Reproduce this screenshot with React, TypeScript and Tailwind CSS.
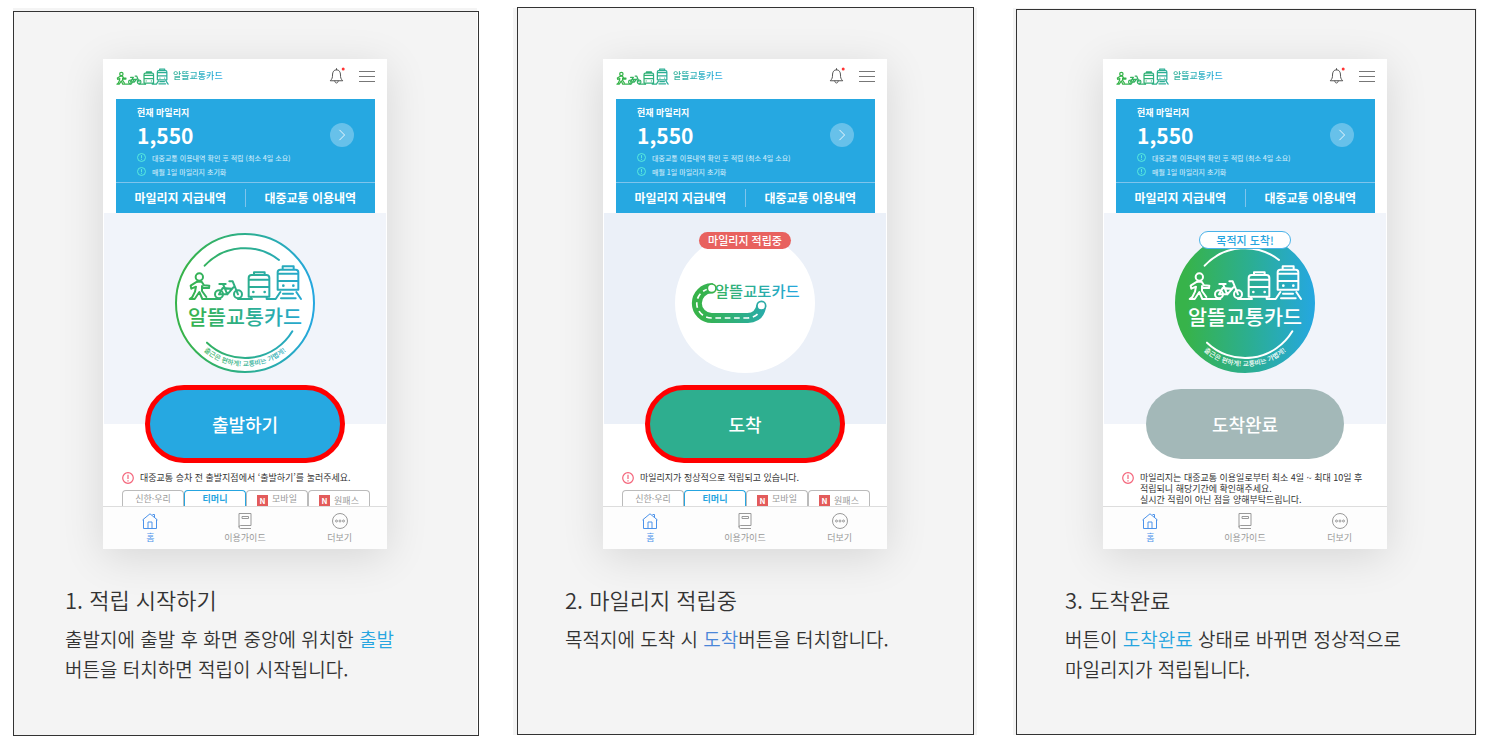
import { type ReactNode } from 'react'

type Stage = 'start' | 'saving' | 'done'

type Step = {
  stage: Stage
  frame: string
  title: string
  body: ReactNode
}

const STEPS: Step[] = [
  {
    stage: 'start',
    frame: 'left-0 -right-[2px] top-[3px] -bottom-px',
    title: '1. 적립 시작하기',
    body: (
      <>
        출발지에 출발 후 화면 중앙에 위치한 <span className="text-[#26a5e0]">출발</span>
        <br />
        버튼을 터치하면 적립이 시작됩니다.
      </>
    ),
  },
  {
    stage: 'saving',
    frame: 'left-1 right-[3px] -top-px bottom-0',
    title: '2. 마일리지 적립중',
    body: (
      <>
        목적지에 도착 시 <span className="text-[#4a86d8]">도착</span>버튼을 터치합니다.
      </>
    ),
  },
  {
    stage: 'done',
    frame: 'left-[3px] right-px top-px bottom-0',
    title: '3. 도착완료',
    body: (
      <>
        버튼이 <span className="text-[#26a5e0]">도착완료</span> 상태로 바뀌면 정상적으로
        <br />
        마일리지가 적립됩니다.
      </>
    ),
  },
]

const CARD_TABS = [
  { name: '신한·우리' },
  { name: '티머니', active: true },
  { name: '모바일', badge: true },
  { name: '원패스', badge: true, single: true },
]

function BrandGradient({ id, from = 46, to = 466 }: { id: string; from?: number; to?: number }) {
  return (
    <linearGradient id={id} gradientUnits="userSpaceOnUse" x1={from} y1="0" x2={to} y2="0">
      <stop offset="0.08" stopColor="#37b34a" />
      <stop offset="0.55" stopColor="#2bae94" />
      <stop offset="1" stopColor="#25a7e1" />
    </linearGradient>
  )
}

// walker, bicycle, bus and train standing on one line
function Vehicles({ stroke, width }: { stroke: string; width: number }) {
  return (
    <g fill="none" stroke={stroke} strokeWidth={width} strokeLinecap="round" strokeLinejoin="round">
      <circle cx="119" cy="169" r="11" />
      <path d="M112 183 L93 195 L95 204 L109 198 L106 213 L98 229 L90 235 H105 L119 214 L128 235 H182" />
      <path d="M112 183 H126 L133 194 L149 195 L148 202 L130 201 L127 196 L127 211 L140 229" />
      <circle cx="178" cy="221" r="12" />
      <circle cx="235" cy="221" r="12" />
      <path d="M178 221 L189 202 L218 204 L203 221 H178 M179 190 H198 M190 190 L203 221 M209 182 H219 L235 221 M203 221 L221 200 M235 235 H277" />
      <path d="M267 172 Q267 163 276 163 H320 Q329 163 329 172 V228 H267 Z M283 162 V155 H315 V162 M267 177 H329 M267 199 H329 M274 229 V235 M321 229 V235 H348 L362 214" />
      <path d="M354 155 Q354 147 362 147 H408 Q416 147 416 155 V207 H354 Z M369 146 V137 H402 V146 M354 159 H416 M354 181 H416 M410 214 L424 235 M370 219 H400 M364 233 H408" />
      <g fill={stroke} stroke="none">
        <circle cx="281" cy="214" r="4" />
        <circle cx="315" cy="214" r="4" />
        <circle cx="371" cy="195" r="4" />
        <circle cx="401" cy="195" r="4" />
      </g>
    </g>
  )
}

function Emblem({ id, filled = false }: { id: string; filled?: boolean }) {
  const paint = `url(#${id})`
  const ink = filled ? '#ffffff' : paint
  return (
    <svg viewBox="46 37 420 420" className="h-[140px] w-[140px]" role="img" aria-label="알뜰교통카드">
      <defs>
        <BrandGradient id={id} />
        <path id={`${id}-arc`} d="M66 247 A190 190 0 0 0 446 247" />
      </defs>
      <circle cx="256" cy="247" r="207" fill={filled ? paint : '#ffffff'} stroke={paint} strokeWidth="6" />
      <g fill="none" stroke={ink} strokeWidth="6" strokeLinecap="round">
        <path d="M135 135 A165 165 0 0 1 358 118" />
        <path d="M142 366 A165 165 0 0 0 398 332" />
      </g>
      <Vehicles stroke={ink} width={6} />
      <text x="256" y="314" textAnchor="middle" fontSize="62" fontWeight="500" fill={ink}>
        알뜰교통카드
      </text>
      <text fontSize="20" fontWeight="500" fill={ink} textAnchor="middle">
        <textPath href={`#${id}-arc`} startOffset="50%">
          출근은 편하게! 교통비는 가볍게!
        </textPath>
      </text>
    </svg>
  )
}

function RoadEmblem() {
  return (
    <svg viewBox="46 37 420 420" className="h-[140px] w-[140px]" role="img" aria-label="알뜰교통카드">
      <defs>
        <BrandGradient id="road" from={96} to={420} />
      </defs>
      <circle cx="256" cy="247" r="210" fill="#ffffff" />
      <path
        d="M160 203 H156 A44 44 0 0 0 156 292 H264 Q300 290 305 255"
        fill="none"
        stroke="url(#road)"
        strokeWidth="30"
      />
      <path
        d="M146 205 A44 44 0 0 0 156 292 H264 Q290 290 300 272"
        fill="none"
        stroke="#ffffff"
        strokeWidth="5"
        strokeDasharray="17 11"
      />
      <circle cx="156" cy="203" r="13" fill="#ffffff" stroke="#37b34a" strokeWidth="5" />
      <circle cx="305" cy="255" r="13" fill="#ffffff" stroke="#2aaba6" strokeWidth="5" />
      <text x="166" y="228" fontSize="46" fontWeight="500" fill="url(#road)">
        알뜰교토카드
      </text>
    </svg>
  )
}

function HeaderLogo({ id }: { id: string }) {
  return (
    <div className="flex items-center gap-1">
      <svg viewBox="84 130 346 110" className="h-[17px] w-[53px]" aria-hidden="true">
        <defs>
          <BrandGradient id={id} from={84} to={640} />
        </defs>
        <Vehicles stroke={`url(#${id})`} width={8} />
      </svg>
      <span className="bg-linear-to-r from-[#2bae94] to-[#25a7e1] bg-clip-text text-[9px] leading-3 font-medium text-transparent">
        알뜰교통카드
      </span>
    </div>
  )
}

function BellIcon() {
  return (
    <svg viewBox="0 0 16 18" className="h-[18px] w-4" fill="none" stroke="#555555" strokeLinecap="round" strokeLinejoin="round">
      <path d="M1.5 13.5 C3.2 12 3.5 10.5 3.5 8 C3.5 4.8 5 2.8 7.5 2.8 C10 2.8 11.5 4.8 11.5 8 C11.5 10.5 11.8 12 13.5 13.5 Z M7.5 2.8 V1.6 M5.8 14 C5.8 16.8 9.2 16.8 9.2 14" />
      <circle cx="14.2" cy="2" r="1.5" fill="#f33" stroke="none" />
    </svg>
  )
}

function Notice({ className }: { className: string }) {
  return (
    <svg viewBox="0 0 12 12" className={className} fill="none" stroke="currentColor" strokeWidth="1.2" aria-hidden="true">
      <circle cx="6" cy="6" r="5.3" />
      <path d="M6 2.8 V7 M6 8.2 V9.4" />
    </svg>
  )
}

function MileagePanel() {
  return (
    <section className="mr-3 ml-[13px] bg-[#26a8e1] text-white">
      <div className="flex h-[84px] items-center justify-between border-b border-[#7fc4ec] px-[21px] pt-1">
        <div>
          <h3 className="text-[9px] leading-3 font-bold">현재 마일리지</h3>
          <p className="text-[21px] leading-8 font-bold">1,550</p>
          <ul className="text-[7px] leading-[14px] font-medium text-[#c4e7f8]">
            <li className="flex items-center gap-[6px]">
              <Notice className="h-[9px] w-[9px] text-[#5ff0dc]" />
              대중교통 이용내역 확인 후 적립 (최소 4일 소요)
            </li>
            <li className="flex items-center gap-[6px]">
              <Notice className="h-[9px] w-[9px] text-[#5ff0dc]" />
              매월 1일 마일리지 초기화
            </li>
          </ul>
        </div>
        <button
          type="button"
          aria-label="마일리지 상세"
          className="-mt-4 flex h-6 w-6 shrink-0 items-center justify-center rounded-full bg-[#67c1ea]"
        >
          <svg viewBox="0 0 8 14" className="h-3 w-2" fill="none" stroke="#ffffff">
            <path d="M1 1 L7 7 L1 13" />
          </svg>
        </button>
      </div>
      <div className="grid h-[30px] grid-cols-2 items-center text-[12px] leading-[18px] font-bold">
        <button type="button" className="border-r border-[#7fc4ec]">
          마일리지 지급내역
        </button>
        <button type="button">대중교통 이용내역</button>
      </div>
    </section>
  )
}

function StageView({ stage }: { stage: Stage }) {
  return (
    <div
      className={`relative mx-px flex h-[211px] justify-center pt-5 ${
        stage === 'saving' ? 'bg-[#ebf0f8]' : 'bg-[#f1f4fa]'
      }`}
    >
      {stage === 'start' ? <Emblem id="emblem-start" /> : null}
      {stage === 'saving' ? <RoadEmblem /> : null}
      {stage === 'done' ? <Emblem id="emblem-done" filled /> : null}
      {stage === 'saving' ? (
        <span className="absolute top-[19px] w-[92px] rounded-full bg-[#e8625f] text-center text-[11px] leading-[17px] font-medium text-white">
          마일리지 적립중
        </span>
      ) : null}
      {stage === 'done' ? (
        <span className="absolute top-[18px] w-[92px] rounded-full border border-[#4bb3e8] bg-white text-center text-[11px] leading-4 font-medium text-[#26a5e0]">
          목적지 도착!
        </span>
      ) : null}
    </div>
  )
}

const ACTION = {
  start: { label: '출발하기', style: 'h-[78px] w-[200px] border-5 border-[#ff0000] bg-[#26a8e1]' },
  saving: { label: '도착', style: 'h-[78px] w-[200px] border-5 border-[#ff0000] bg-[#2eae8f]' },
  done: { label: '도착완료', style: 'h-[70px] w-[198px] bg-[#a3b8b8]' },
}

function Message({ stage }: { stage: Stage }) {
  return (
    <div className="flex gap-[6px] pl-[19px] text-[9px] leading-[11px] text-[#333333]">
      <Notice className="h-3 w-3 shrink-0 text-[#f4657b]" />
      {stage === 'start' ? <p>대중교통 승차 전 출발지점에서 ‘출발하기’를 눌러주세요.</p> : null}
      {stage === 'saving' ? <p>마일리지가 정상적으로 적립되고 있습니다.</p> : null}
      {stage === 'done' ? (
        <p>
          마일리지는 대중교통 이용일로부터 최소 4일 ~ 최대 10일 후
          <br />
          적립되니 해당기간에 확인해주세요.
          <br />
          실시간 적립이 아닌 점을 양해부탁드립니다.
        </p>
      ) : null}
    </div>
  )
}

function CardTabs() {
  return (
    <div className="mt-[6px] mr-[17px] ml-[19px] grid grid-cols-4 text-[9px] leading-[11px]">
      {CARD_TABS.map((tab) => (
        <button
          key={tab.name}
          type="button"
          className={`flex h-4 items-start justify-center gap-1 rounded-t border border-b-0 ${
            tab.single ? 'pt-1' : 'pt-[2px]'
          } ${tab.active ? 'border-[#26a5e0] font-bold text-[#26a5e0]' : 'border-[#bbbbbb] text-[#999999]'}`}
        >
          {tab.badge ? (
            <span className="h-[11px] w-[11px] self-end bg-[#e35b5b] text-[8px] font-bold text-white">N</span>
          ) : null}
          {tab.name}
        </button>
      ))}
    </div>
  )
}

function BottomNav() {
  return (
    <nav className="grid h-[43px] grid-cols-3 border-t border-[#dddddd] bg-[#fdfdfd] text-[9px] leading-3 text-[#999999]">
      <a href="#home" className="flex flex-col items-center gap-[3px] pt-[6px] text-[#4c93ea]">
        <svg viewBox="0 0 16 16" className="h-4 w-4" fill="none" stroke="currentColor">
          <path d="M0.5 7 L8 0.8 L15.5 7 M1.5 6.5 V15.5 H14.5 V6.5 M12.5 4 V1.5 H10.5 M6 15 V9 H10 V15" />
        </svg>
        홈
      </a>
      <a href="#guide" className="flex flex-col items-center gap-[3px] pt-[6px]">
        <svg viewBox="0 0 16 16" className="h-4 w-4" fill="none" stroke="currentColor">
          <path d="M2 14 V0.5 H14 V12.5 H3.5 Q2 12.5 2 14 Q2 15.5 3.5 15.5 H14 M5 3.5 H11.5 V5.5 H5 Z" />
        </svg>
        이용가이드
      </a>
      <a href="#more" className="flex flex-col items-center gap-[3px] pt-[6px]">
        <svg viewBox="0 0 16 16" className="h-4 w-4" fill="none" stroke="currentColor">
          <circle cx="8" cy="8" r="7.5" />
          <circle cx="4.5" cy="8" r="1" />
          <circle cx="8" cy="8" r="1" />
          <circle cx="11.5" cy="8" r="1" />
        </svg>
        더보기
      </a>
    </nav>
  )
}

function Phone({ stage }: { stage: Stage }) {
  const action = ACTION[stage]
  return (
    <div className="mx-auto w-[284px] bg-white shadow-[0_8px_40px_rgba(0,0,0,0.12)]">
      <header className="flex h-10 items-center justify-between pr-3 pb-[6px] pl-[13px]">
        <HeaderLogo id={`logo-${stage}`} />
        <div className="flex items-center gap-[14px]">
          <BellIcon />
          <button type="button" aria-label="메뉴" className="flex w-4 flex-col gap-1">
            <span className="h-px bg-[#777777]" />
            <span className="h-px bg-[#777777]" />
            <span className="h-px bg-[#777777]" />
          </button>
        </div>
      </header>
      <MileagePanel />
      <StageView stage={stage} />
      <div className="relative -mt-[39px] flex h-[78px] items-center justify-center">
        <button type="button" className={`rounded-full text-[18px] leading-6 font-medium text-white ${action.style}`}>
          {action.label}
        </button>
      </div>
      <div className="h-[43px] pt-[9px]">
        <Message stage={stage} />
        {stage === 'done' ? null : <CardTabs />}
      </div>
      <BottomNav />
    </div>
  )
}

export default function App() {
  return (
    <main
      lang="ko"
      className="grid grid-cols-3 gap-9 bg-white pt-2 pr-[9px] pb-[15px] pl-[13px] font-['Noto_Sans_CJK_KR',sans-serif] text-[#333333]"
    >
      {STEPS.map((step) => (
        <article key={step.stage} className="relative bg-[#f4f4f4] pt-[51px] pb-[51px]">
          <div className={`pointer-events-none absolute border border-[#333333] ${step.frame}`} />
          <Phone stage={step.stage} />
          <div className="relative pl-[52px]">
            <h2 className="mt-[34px] text-[22px] leading-8 font-[350]">{step.title}</h2>
            <p className="mt-[9px] text-[19px] leading-[30px] font-[350]">{step.body}</p>
          </div>
        </article>
      ))}
    </main>
  )
}
